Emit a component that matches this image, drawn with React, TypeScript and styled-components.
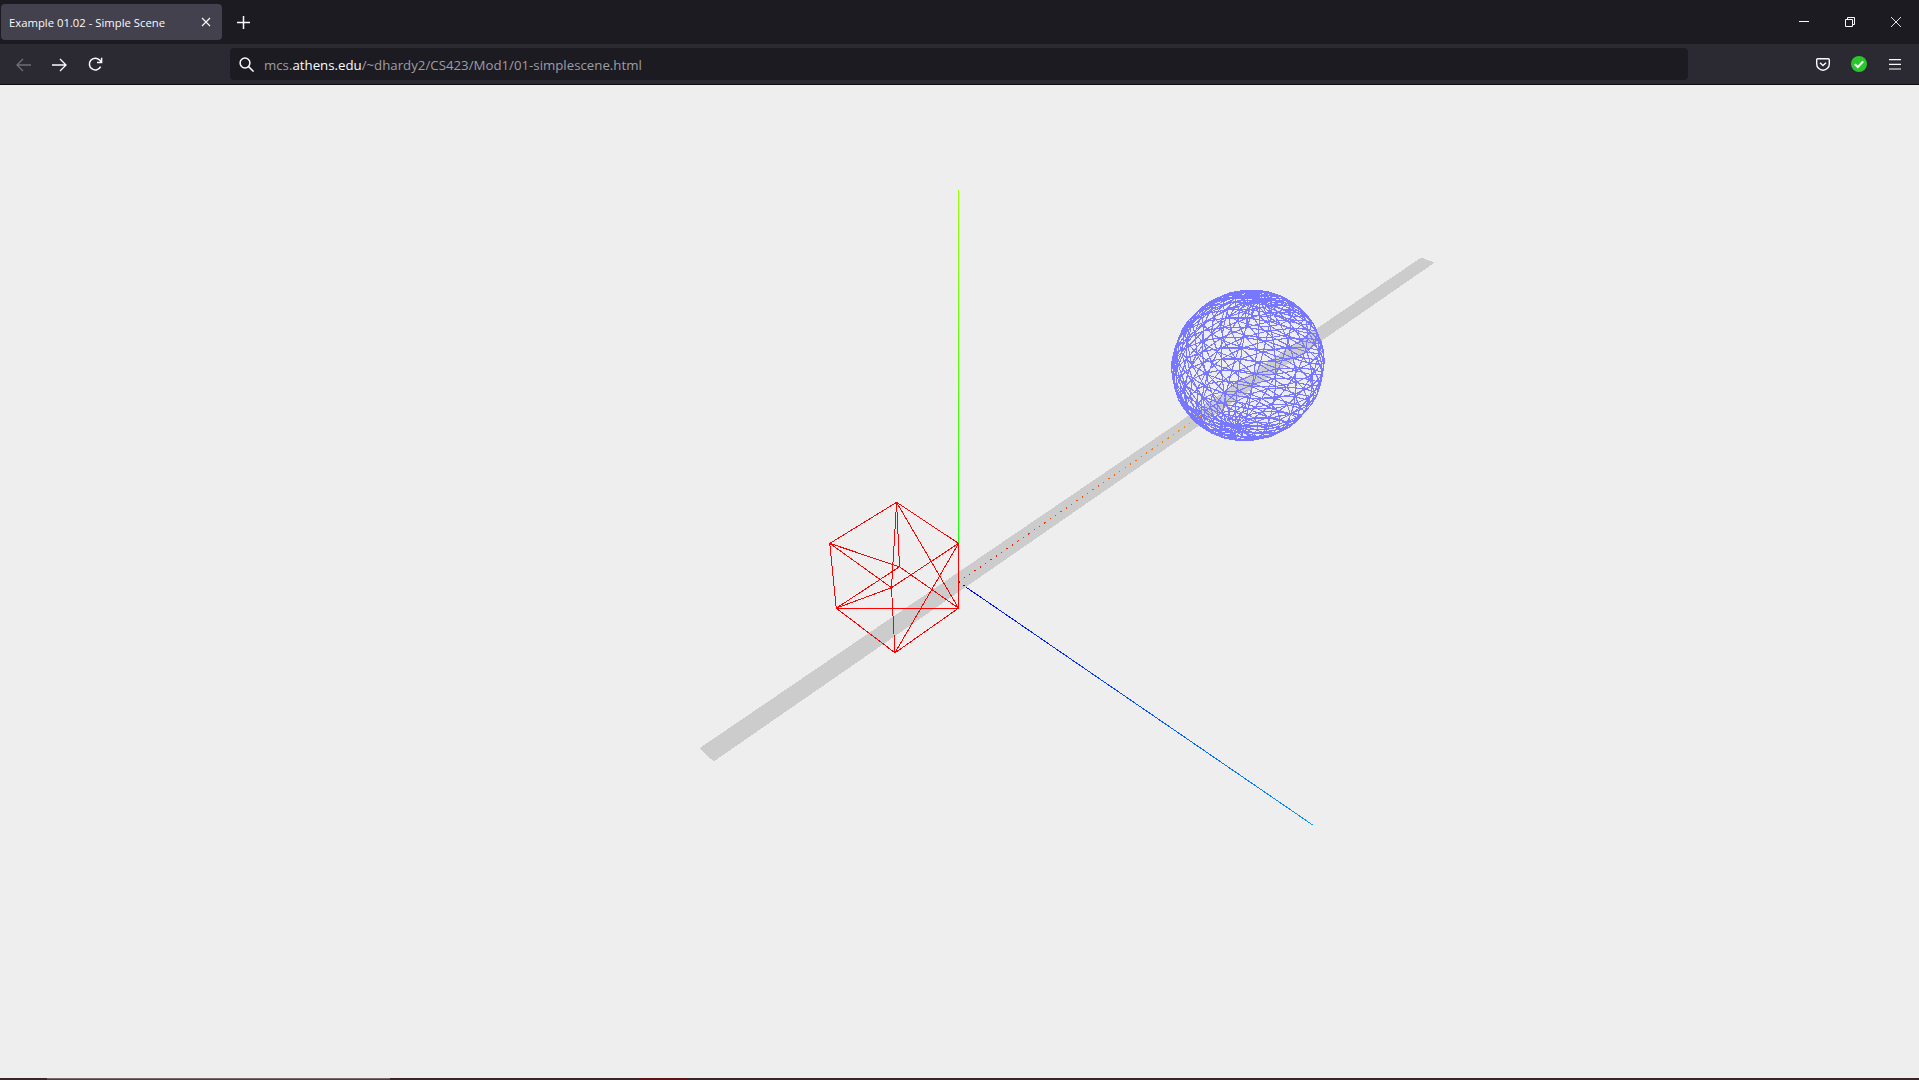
import React from "react";
import styled, { createGlobalStyle } from "styled-components";

const GlobalStyle = createGlobalStyle`
  html, body {
    margin: 0;
    padding: 0;
    height: 100%;
    overflow: hidden;
    background: #eeeeee;
  }
  #root {
    height: 100%;
  }
`;

// same camera as the three.js page: (-30, 40, 30), fov 45, looking at the origin
type Vec3 = [number, number, number];

const CANVAS_W = 1919;
const CANVAS_H = 993;
const CX = 958.5;
const CY = 497;
const FOCAL = 995.5 / 2 / Math.tan((22.5 * Math.PI) / 180);
const CAM: Vec3 = [-30, 40, 30];
const CAM_LEN = Math.sqrt(3400);
const F: Vec3 = [30 / CAM_LEN, -40 / CAM_LEN, -30 / CAM_LEN];
const R: Vec3 = [Math.SQRT1_2, 0, Math.SQRT1_2];
const U: Vec3 = [
  R[1] * F[2] - R[2] * F[1],
  R[2] * F[0] - R[0] * F[2],
  R[0] * F[1] - R[1] * F[0],
];

const dot = (a: Vec3, b: Vec3) => a[0] * b[0] + a[1] * b[1] + a[2] * b[2];

function project(p: Vec3): [number, number] {
  const rel: Vec3 = [p[0] - CAM[0], p[1] - CAM[1], p[2] - CAM[2]];
  const depth = dot(rel, F);
  return [
    CX + (dot(rel, R) * FOCAL) / depth,
    CY - (dot(rel, U) * FOCAL) / depth,
  ];
}

const fmt = (p: [number, number]) => `${p[0].toFixed(1)} ${p[1].toFixed(1)}`;
const seg = (a: Vec3, b: Vec3) => `M${fmt(project(a))}L${fmt(project(b))}`;

function cubePath() {
  const c: Vec3 = [-4, 3, 0];
  const p = (x: number, y: number, z: number): Vec3 => [
    c[0] + x * 2,
    c[1] + y * 2,
    c[2] + z * 2,
  ];
  const out: string[] = [];
  const signs = [-1, 1];
  // outer edges
  signs.forEach((a) =>
    signs.forEach((b) => {
      out.push(seg(p(-1, a, b), p(1, a, b)));
      out.push(seg(p(a, -1, b), p(a, 1, b)));
      out.push(seg(p(a, b, -1), p(a, b, 1)));
    })
  );
  // one diagonal per face
  out.push(seg(p(1, -1, 1), p(1, 1, -1)));
  out.push(seg(p(-1, -1, -1), p(-1, 1, 1)));
  out.push(seg(p(-1, 1, 1), p(1, 1, -1)));
  out.push(seg(p(-1, -1, -1), p(1, -1, 1)));
  out.push(seg(p(-1, -1, 1), p(1, 1, 1)));
  out.push(seg(p(1, -1, -1), p(-1, 1, -1)));
  return out.join("");
}

function spherePath() {
  const c: Vec3 = [20, 4, 2];
  const r = 4;
  const n = 20;
  const v = (iy: number, ix: number): Vec3 => {
    const a = (ix / n) * Math.PI * 2;
    const b = (iy / n) * Math.PI;
    return [
      c[0] - r * Math.cos(a) * Math.sin(b),
      c[1] + r * Math.cos(b),
      c[2] + r * Math.sin(a) * Math.sin(b),
    ];
  };
  const out: string[] = [];
  for (let y = 0; y < n; y++) {
    for (let x = 0; x < n; x++) {
      if (y > 0) out.push(seg(v(y, x), v(y, x + 1)));
      out.push(seg(v(y, x), v(y + 1, x)));
      if (y > 0 && y < n - 1) out.push(seg(v(y, x), v(y + 1, x + 1)));
      if (y === 0) out.push(seg(v(0, x), v(1, x + 1)));
    }
  }
  return out.join("");
}

const planePoints = (
  [
    [-15, 0, -0.5],
    [-15, 0, 0.5],
    [45, 0, 0.5],
    [45, 0, -0.5],
  ] as Vec3[]
)
  .map((p) => project(p).map((n) => n.toFixed(1)).join(","))
  .join(" ");

const origin = project([0, 0, 0]);
const xEnd = project([20, 0, 0]);
const yEnd = project([0, 20, 0]);
const zEnd = project([0, 0, 20]);
const zEdge = project([0, 0, 0.5]);

const Page = styled.div`
  display: flex;
  flex-direction: column;
  height: 100vh;
  background: #eeeeee;
  font-family: "Open Sans", "Noto Sans", sans-serif;
`;

const TabBar = styled.div`
  display: flex;
  align-items: center;
  height: 44px;
  padding-left: 1px;
  box-sizing: border-box;
  background: #1c1b22;
`;

const Tab = styled.div`
  display: flex;
  align-items: center;
  justify-content: space-between;
  box-sizing: border-box;
  width: 221px;
  height: 36px;
  padding: 0 11px 0 8px;
  border-radius: 4px;
  background: #42414d;
  color: #fbfbfe;
  font-size: 11.3px;
`;

const TabTitle = styled.span`
  white-space: nowrap;
`;

const NewTab = styled.div`
  display: flex;
  align-items: center;
  justify-content: center;
  width: 36px;
  height: 36px;
  margin-left: 3px;
  color: #fbfbfe;
`;

const WindowControls = styled.div`
  display: flex;
  margin-left: auto;
`;

const WindowButton = styled.div`
  display: flex;
  align-items: center;
  justify-content: center;
  width: 46px;
  height: 42px;
  color: #fbfbfe;
`;

const Toolbar = styled.div`
  display: flex;
  align-items: center;
  box-sizing: content-box;
  height: 40px;
  padding: 0 6px 0 5px;
  background: #2b2a33;
  border-bottom: 1px solid #0c0c0d;
`;

const ToolGroup = styled.div`
  display: flex;
  flex: none;
`;

const ToolButton = styled.div<{ $dim?: boolean; $low?: boolean }>`
  display: flex;
  align-items: center;
  justify-content: center;
  width: 36px;
  height: 32px;
  padding-top: ${(p) => (p.$low ? "1px" : "0")};
  box-sizing: border-box;
  color: ${(p) => (p.$dim ? "#6f6e76" : "#fbfbfe")};
`;

const UrlBar = styled.div`
  display: flex;
  flex: 1;
  align-items: center;
  gap: 10px;
  height: 32px;
  margin: 0 117px;
  padding-left: 9px;
  box-sizing: border-box;
  border-radius: 4px;
  background: #1c1b22;
  color: #fbfbfe;
`;

const UrlText = styled.div`
  padding-top: 2px;
  color: #9d9da3;
  font-size: 13.25px;
  white-space: nowrap;

  b {
    color: #fbfbfe;
    font-weight: 400;
  }
`;

const Canvas = styled.div`
  flex: 1;
  min-height: 0;
`;

const SceneSvg = styled.svg`
  display: block;
  width: 100%;
  height: 100%;
`;

const BottomStrip = styled.div`
  display: flex;
  flex: none;
  height: 2px;
  padding-left: 47px;
  background: #3a2629;
`;

const StripTask = styled.div`
  box-sizing: border-box;
  width: 343px;
  border-top: 1px solid #75666a;
  background: #4f3f40;
`;

const StripAlert = styled.div`
  width: 48px;
  margin-left: 250px;
  background: #5c1518;
`;

const IconSvg = styled.svg`
  display: block;
  fill: none;
  stroke: currentColor;
`;

const Scene = () => (
  <SceneSvg viewBox={`0 0 ${CANVAS_W} ${CANVAS_H}`}>
    <defs>
      <linearGradient id="axisX" gradientUnits="userSpaceOnUse" x1={origin[0]} y1={origin[1]} x2={xEnd[0]} y2={xEnd[1]}>
        <stop offset="0" stopColor="#ff0000" />
        <stop offset="1" stopColor="#ff9900" />
      </linearGradient>
      <linearGradient id="axisY" gradientUnits="userSpaceOnUse" x1={origin[0]} y1={origin[1]} x2={yEnd[0]} y2={yEnd[1]}>
        <stop offset="0" stopColor="#00ff00" />
        <stop offset="1" stopColor="#99ff00" />
      </linearGradient>
      <linearGradient id="axisZ" gradientUnits="userSpaceOnUse" x1={origin[0]} y1={origin[1]} x2={zEnd[0]} y2={zEnd[1]}>
        <stop offset="0" stopColor="#0000ff" />
        <stop offset="1" stopColor="#0099ff" />
      </linearGradient>
    </defs>
    <polygon points={planePoints} fill="#cccccc" shapeRendering="crispEdges" />
    <g shapeRendering="crispEdges" fill="none" strokeWidth={1}>
      <path d={`M${fmt(origin)}L${fmt(xEnd)}`} stroke="url(#axisX)" strokeDasharray="1.5 5" />
      <path d={`M${fmt(origin)}L${fmt(yEnd)}`} stroke="url(#axisY)" />
      <path d={`M${fmt(origin)}L${fmt(zEdge)}`} stroke="url(#axisZ)" strokeDasharray="1.5 4" />
      <path d={`M${fmt(zEdge)}L${fmt(zEnd)}`} stroke="url(#axisZ)" />
      <path d={cubePath()} stroke="#ff0000" />
      <path d={spherePath()} stroke="#7777ff" strokeWidth={1.1} />
    </g>
  </SceneSvg>
);

export default function App() {
  return (
    <Page>
      <GlobalStyle />
      <TabBar>
        <Tab>
          <TabTitle>Example 01.02 - Simple Scene</TabTitle>
          <IconSvg width="10" height="10" viewBox="0 0 10 10" strokeWidth="1.1">
            <path d="M1 1l8 8M9 1l-8 8" />
          </IconSvg>
        </Tab>
        <NewTab>
          <IconSvg width="13" height="13" viewBox="0 0 13 13" strokeWidth="1.5">
            <path d="M6.5 0v13M0 6.5h13" />
          </IconSvg>
        </NewTab>
        <WindowControls>
          <WindowButton>
            <IconSvg width="10" height="10" viewBox="0 0 10 10" strokeWidth="1">
              <path d="M0 4.500h10" />
            </IconSvg>
          </WindowButton>
          <WindowButton>
            <IconSvg width="10" height="10" viewBox="0 0 10 10" strokeWidth="1">
              <path d="M.5 2.500h7v7h-7zM2.500 2.500v-2h7v7h-2" />
            </IconSvg>
          </WindowButton>
          <WindowButton>
            <IconSvg width="10" height="10" viewBox="0 0 10 10" strokeWidth="0.9">
              <path d="M0 0l10 10M10 0L0 10" />
            </IconSvg>
          </WindowButton>
        </WindowControls>
      </TabBar>
      <Toolbar>
        <ToolGroup>
          <ToolButton $dim $low>
            <IconSvg width="15" height="14" viewBox="0 0 15 14" strokeWidth="1.3">
              <path d="M15 7H1M7 1L1 7l6 6" />
            </IconSvg>
          </ToolButton>
          <ToolButton $low>
            <IconSvg width="15" height="14" viewBox="0 0 15 14" strokeWidth="1.3">
              <path d="M0 7h14M8 1l6 6-6 6" />
            </IconSvg>
          </ToolButton>
          <ToolButton $low>
            <IconSvg width="15" height="15" viewBox="0 0 15 15" strokeWidth="1.5">
              <path d="M12.600 9.600A5.900 5.900 0 1 1 11.600 3L13.400 5" />
              <path d="M13.600.8v4.600H9" />
            </IconSvg>
          </ToolButton>
        </ToolGroup>
        <UrlBar>
          <IconSvg width="15" height="15" viewBox="0 0 15 15" strokeWidth="1.5">
            <circle cx="6" cy="6" r="4.900" />
            <path d="M9.600 9.600l5 5" />
          </IconSvg>
          <UrlText>
            mcs.<b>athens.edu</b>/~dhardy2/CS423/Mod1/01-simplescene.html
          </UrlText>
        </UrlBar>
        <ToolGroup>
          <ToolButton>
            <IconSvg width="14" height="13" viewBox="0 0 14 13" strokeWidth="1.4">
              <path d="M1.800.7h10.400c.6 0 1.100.5 1.100 1.100v4.100a6.300 6.300 0 0 1-12.600 0V1.800C.7 1.200 1.200.7 1.800.7z" />
              <path d="M4 4.800l3 2.800 3-2.800" />
            </IconSvg>
          </ToolButton>
          <ToolButton>
            <svg width="16" height="16" viewBox="0 0 16 16">
              <circle cx="8" cy="8" r="8" fill="#2bc62b" />
              <path d="M3.800 8.300l3 2.700 5.400-5.600" fill="none" stroke="#ffffff" strokeWidth="2" />
            </svg>
          </ToolButton>
          <ToolButton>
            <IconSvg width="12" height="11" viewBox="0 0 12 11" strokeWidth="1.2">
              <path d="M0 .6h12M0 5.300h12M0 10h12" />
            </IconSvg>
          </ToolButton>
        </ToolGroup>
      </Toolbar>
      <Canvas>
        <Scene />
      </Canvas>
      <BottomStrip>
        <StripTask />
        <StripAlert />
      </BottomStrip>
    </Page>
  );
}
